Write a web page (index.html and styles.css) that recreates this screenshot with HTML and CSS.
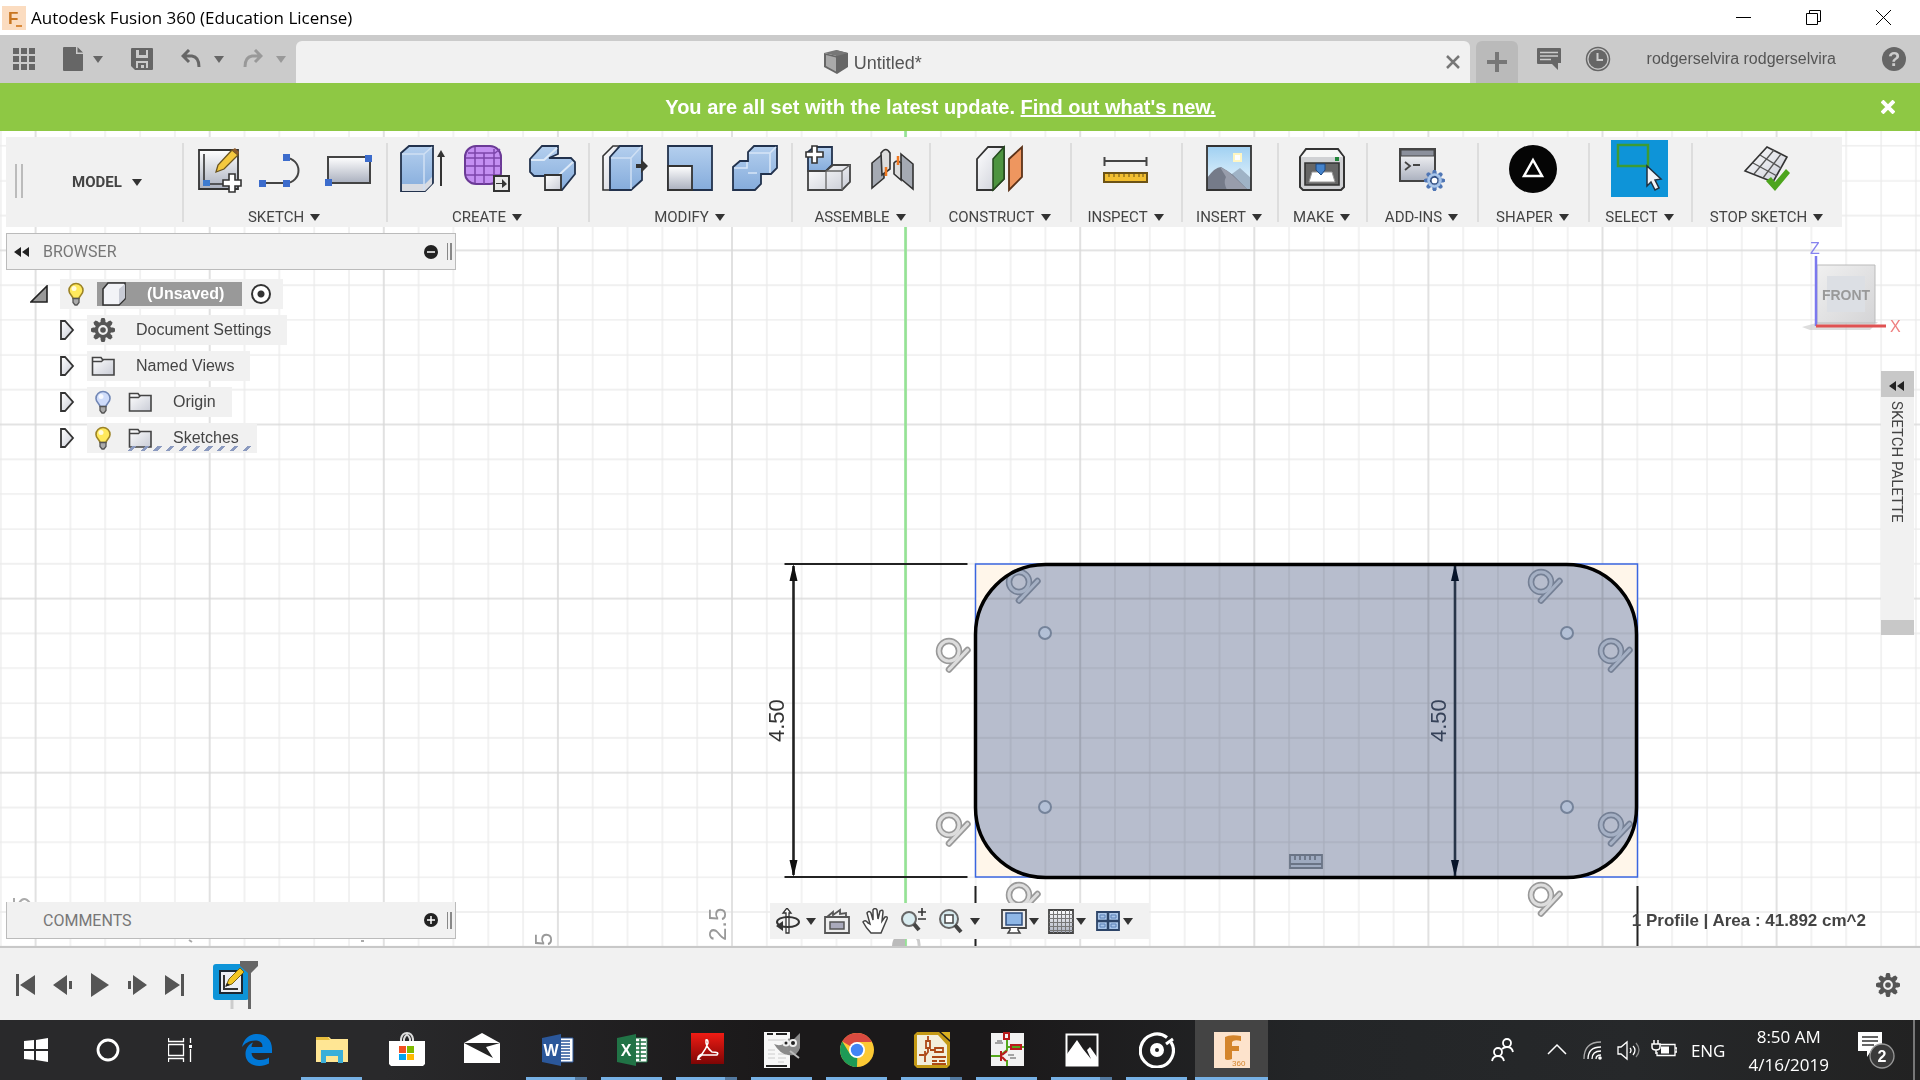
FILE: index.html
```html
<!DOCTYPE html>
<html lang="en">
<head>
<meta charset="utf-8">
<title>Autodesk Fusion 360 (Education License)</title>
<link rel="stylesheet" href="styles.css">
</head>
<body>
<svg class="defs" aria-hidden="true">
  <defs>
    <linearGradient id="blue" x1="0" y1="0" x2="0" y2="1"><stop offset="0" stop-color="#b4cfee"/><stop offset="1" stop-color="#85acdc"/></linearGradient>
    <linearGradient id="grey" x1="0" y1="0" x2="0" y2="1"><stop offset="0" stop-color="#fff"/><stop offset="1" stop-color="#aab0be"/></linearGradient>
    <linearGradient id="pale" x1="0" y1="0" x2="1" y2="1"><stop offset="0" stop-color="#fff"/><stop offset="1" stop-color="#c9ccd6"/></linearGradient>
    <linearGradient id="sky" x1="0" y1="0" x2="0" y2="1"><stop offset="0" stop-color="#9fd0f2"/><stop offset="1" stop-color="#eef8fd"/></linearGradient>
    <linearGradient id="red" x1="0" y1="0" x2="0" y2="1"><stop offset="0" stop-color="#f01c14"/><stop offset="1" stop-color="#7d0505"/></linearGradient>
    <linearGradient id="cube" x1="0" y1="0" x2="1" y2="1"><stop offset="0" stop-color="#f0f0f0"/><stop offset="1" stop-color="#d4d4d6"/></linearGradient>
    <symbol id="caret" viewBox="0 0 10 8"><path d="M0 1h10L5 8z"/></symbol>
    <symbol id="closed" viewBox="0 0 16 22"><path d="M2 2h4l8 9-8 9H2z" fill="url(#pale)" stroke="#333" stroke-width="1.8"/></symbol>
    <symbol id="folder" viewBox="0 0 24 24"><path d="M1.500 21V3.500H10l1.500 2H23V21z" fill="url(#pale)" stroke="#444" stroke-width="1.600"/><path d="M2 7.500h8.500l2-2" fill="none" stroke="#444" stroke-width="1.400"/></symbol>
    <symbol id="bulb" viewBox="0 0 24 24"><path d="M12 1.500a7 7 0 0 0-7 7c0 4 3.500 4.500 4 8h6c.5-3.500 4-4 4-8a7 7 0 0 0-7-7z" fill="currentColor" stroke="var(--rim)" stroke-width="1.600"/><circle cx="10" cy="6.500" r="2.500" fill="#fff" opacity=".8"/><path d="M9 16.500h6v4L13 23h-2l-2-2.500z" fill="#aaa" stroke="#555" stroke-width="1.300"/></symbol>
    <symbol id="gear" viewBox="0 0 24 24"><g fill="currentColor"><path id="tooth" d="M9.600 5V2L10.500 0h3l.9 2v3z"/><use href="#tooth" transform="rotate(45 12 12)"/><use href="#tooth" transform="rotate(90 12 12)"/><use href="#tooth" transform="rotate(135 12 12)"/><use href="#tooth" transform="rotate(180 12 12)"/><use href="#tooth" transform="rotate(225 12 12)"/><use href="#tooth" transform="rotate(270 12 12)"/><use href="#tooth" transform="rotate(315 12 12)"/></g><circle cx="12" cy="12" r="6.600" fill="none" stroke="currentColor" stroke-width="3.400"/><circle cx="12" cy="12" r="2.800" fill="currentColor"/></symbol>
    <g id="tangent-shape"><circle r="10"/><path d="M0 18.500 18.500-1"/></g>
    <g id="tangent" fill="none" stroke-linecap="round"><use href="#tangent-shape" stroke="var(--edge,#999)" stroke-width="6.500"/><use href="#tangent-shape" stroke="var(--core,#ddd)" stroke-width="3.200"/></g>
    <g id="spot"><circle r="6" fill="#b3c0d6" stroke="#75839a" stroke-width="2"/></g>
  </defs>
</svg>

<header class="titlebar">
  <svg width="24" height="24" viewBox="0 0 24 24"><rect width="24" height="24" fill="#fbdcc0"/><text x="6" y="18" class="logo-f">F</text><path d="M14 20h6" stroke="#d98a3c" stroke-width="2"/></svg>
  <h1>Autodesk Fusion 360 (Education License)</h1>
  <div class="window-controls">
    <button aria-label="Minimize"><svg width="15" height="15" viewBox="0 0 15 15"><path d="M0 7.500h15"/></svg></button>
    <button aria-label="Restore"><svg width="15" height="15" viewBox="0 0 15 15"><path d="M.5 3.500h11v11H.5zM3.500 3V.5h11v11H12"/></svg></button>
    <button aria-label="Close"><svg width="15" height="15" viewBox="0 0 15 15"><path d="M0 0l15 15M15 0 0 15"/></svg></button>
  </div>
</header>

<nav class="tabbar">
  <div class="quick">
    <button aria-label="Data panel"><svg width="22" height="22" viewBox="0 0 22 22"><path d="M0 0h6v6H0zM8 0h6v6H8zM16 0h6v6h-6zM0 8h6v6H0zM8 8h6v6H8zM16 8h6v6h-6zM0 16h6v6H0zM8 16h6v6H8zM16 16h6v6h-6z"/></svg></button>
    <button aria-label="File" class="file"><svg width="20" height="24" viewBox="0 0 20 24"><path d="M1 0h12v7h7v16a1 1 0 0 1-1 1H1a1 1 0 0 1-1-1V1a1 1 0 0 1 1-1zM14.500 0 20 5.500h-5.500z"/></svg><svg width="10" height="8"><use href="#caret"/></svg></button>
    <button aria-label="Save" class="save"><svg width="22" height="22" viewBox="0 0 22 22"><path fill-rule="evenodd" d="M1 0h20a1 1 0 0 1 1 1v20a1 1 0 0 1-1 1H4l-4-4V1a1 1 0 0 1 1-1zM5 2v8h12V2h-2v5H8V2zM5 20h2v-5h8v5h2v-7H5zM10 17h3v3h-3z"/></svg></button>
    <button aria-label="Undo"><svg width="20" height="20" viewBox="0 0 20 20"><path d="M8 1 2 7l6 6M2 7h9q7 1 7 11" fill="none" stroke="#666" stroke-width="3"/></svg><svg width="10" height="8"><use href="#caret"/></svg></button>
    <button aria-label="Redo" class="dim"><svg width="20" height="20" viewBox="0 0 20 20"><path d="m12 1 6 6-6 6M18 7H9q-7 1-7 11" fill="none" stroke="#999" stroke-width="3"/></svg><svg width="10" height="8"><use href="#caret"/></svg></button>
  </div>
  <div class="tab">
    <svg width="24" height="24" viewBox="0 0 24 24"><path d="M12 0 24 3v14l-11 7z" fill="#666"/><path d="M0 3 12 0l12 3-11 3z" fill="#777"/><path d="m0 3 13 3v18L0 17z" fill="#666"/><path d="m2 5 10 2.500v14L2 16z" fill="#aaa"/></svg>
    <span>Untitled*</span>
    <button aria-label="Close tab"><svg width="14" height="14" viewBox="0 0 14 14"><path d="m1 1 12 12M13 1 1 13" stroke="#777" stroke-width="2.500"/></svg></button>
  </div>
  <button class="newtab" aria-label="New tab"><svg width="20" height="20" viewBox="0 0 20 20"><path d="M10 0v20M0 10h20" stroke="#777" stroke-width="4"/></svg></button>
  <div class="account">
    <button aria-label="Comments"><svg width="24" height="24" viewBox="0 0 24 24"><path d="M1 1h22a1 1 0 0 1 1 1v14h-3v7l-6-6H1a1 1 0 0 1-1-1V2a1 1 0 0 1 1-1z"/><path d="M3 5.500h18M3 9h18M3 12.500h11" stroke="#ccc" stroke-width="1.500"/></svg></button>
    <button aria-label="Job status"><svg width="26" height="26" viewBox="0 0 26 26"><circle cx="13" cy="13" r="11.500" fill="none" stroke="#666" stroke-width="1.500"/><circle cx="13" cy="13" r="9.500"/><path d="M12.500 7v7H18" fill="none" stroke="#ccc" stroke-width="2"/></svg></button>
    <button class="user">rodgerselvira rodgerselvira</button>
    <button aria-label="Help"><svg width="24" height="24" viewBox="0 0 24 24"><circle cx="12" cy="12" r="12"/><text x="12" y="19" class="q">?</text></svg></button>
  </div>
</nav>

<aside class="notice">
  <p>You are all set with the latest update. <a href="#">Find out what's new.</a></p>
  <button aria-label="Dismiss"><svg width="14" height="14" viewBox="0 0 14 14"><path d="m1 1 12 12M13 1 1 13" stroke="#fff" stroke-width="4"/></svg></button>
</aside>

<main class="canvas">
  <svg class="drawing">
    <defs>
      <pattern id="grid" patternUnits="userSpaceOnUse" x="35.600" y="250.400" width="174.100" height="174.100">
        <path d="M34.800 0v175M69.600 0v175M104.500 0v175M139.300 0v175M0 34.800h175M0 69.600h175M0 104.500h175M0 139.300h175" stroke="#ebebeb" stroke-width="1.300"/>
        <path d="M0 0v175M174.100 0v175M0 0h175M0 174.100h175" stroke="#dadada" stroke-width="1.600"/>
      </pattern>
    </defs>
    <g transform="translate(0 -131)">
      <rect y="131" width="100%" height="100%" fill="url(#grid)"/>
      <path d="M905.500 131V2000" stroke="#94e394" stroke-width="2.600"/>
      <path d="M892 946a14 14 0 0 1 13-14v14z" fill="#bbb"/><path d="M908 931a14 14 0 0 1 11 15" fill="none" stroke="#ccc" stroke-width="3"/>
      <g class="axis"><text transform="translate(552 946) rotate(-90)">5</text><text transform="translate(726 941) rotate(-90)">2.5</text></g>
      <path d="m189 940 3 2M361 941h3M14 898v6M19 903q5-8 11 0" fill="none" stroke="#aaa" stroke-width="2"/>
      <rect x="975.500" y="564" width="662" height="313" fill="#fff6ea" stroke="#3a66e0" stroke-width="1.500"/>
      <g stroke="#222" stroke-width="2"><path d="M784.500 564H967.500M784.500 877H967.500M975.500 886v80M1637.500 886v80"/><path d="M793.500 566V875" stroke-width="2.600"/></g>
      <path d="m793.500 564 4 17h-8zM793.500 877l4-17h-8z" fill="#111"/>
      <g class="dim-text"><text transform="translate(784 742) rotate(-90)">4.50</text></g>
      <rect x="975.500" y="564.500" width="661" height="313" rx="70" fill="#fff"/>
      <rect x="975.500" y="564.500" width="661" height="313" rx="70" fill="url(#grid)"/>
      <rect class="profile" x="975.500" y="564.500" width="661" height="313" rx="70"/>
      <path d="M1455 566V876" stroke="#283549" stroke-width="2.600"/><path d="m1455 564 4 17h-8zM1455 877l4-17h-8z" fill="#07142a"/>
      <g class="dim-text inner"><text transform="translate(1446 742) rotate(-90)">4.50</text></g>
      <use href="#tangent" x="949" y="651"/><use href="#tangent" x="949" y="825"/><use href="#tangent" x="1019" y="895"/><use href="#tangent" x="1541" y="895"/>
      <g class="shaded"><use href="#tangent" x="1019" y="582"/><use href="#tangent" x="1541" y="582"/><use href="#tangent" x="1611" y="651"/><use href="#tangent" x="1611" y="825"/></g>
      <use href="#spot" x="1045" y="633"/><use href="#spot" x="1567" y="633"/><use href="#spot" x="1045" y="807"/><use href="#spot" x="1567" y="807"/>
      <path d="M1290 855h32v13h-32zM1290 864h32M1295 856v4M1300 856v4M1305 856v4M1310 856v4M1315 856v4" fill="#9eaac0" stroke="#6a7486" stroke-width="1.800"/>
      <rect class="outline" x="975.500" y="564.500" width="661" height="313" rx="70"/>
    </g>
  </svg>

  <div class="toolbar">
    <button class="workspace"><i class="grip"></i>MODEL <svg width="10" height="8"><use href="#caret"/></svg></button>
    <section class="group"><div class="icons">
      <button aria-label="Create sketch"><svg viewBox="0 0 48 48"><path d="M4 5h39v39H4z" fill="url(#grey)" stroke="#333" stroke-width="1.800"/><path d="M9 9v30h30" fill="none" stroke="#333" stroke-width="1.600"/><path d="M8 35h7v6H8z" fill="#3d7bd0"/><path d="m21 27 2-7L37 5l6 5-14 14z" fill="#f5c93f" stroke="#6b5520" stroke-width="1.300"/><path d="m37 5 3-2 4 4-1 3z" fill="#8a5a2c"/><path d="M34 29h6v6h6v6h-6v6h-6v-6h-6v-6h6z" fill="#fff" stroke="#333" stroke-width="1.600"/></svg></button>
      <button aria-label="Line"><svg viewBox="0 0 48 48"><path d="M2 38h24a12 12 0 0 0 0-25" fill="none" stroke="#444" stroke-width="2"/><path d="M-1 35h7v7h-7zM23 35h7v7h-7zM23 9h7v7h-7z" fill="#3c6ccc"/></svg></button>
      <button aria-label="Rectangle"><svg viewBox="0 0 48 48"><path d="M3 12h42v26H3z" fill="url(#grey)" stroke="#444" stroke-width="2"/><path d="M0 34h7v7H0zM40 10h7v7h-7z" fill="#3c6ccc"/></svg></button></div>
      <button class="label">SKETCH <svg width="10" height="8"><use href="#caret"/></svg></button></section>
    <section class="group"><div class="icons">
      <button aria-label="Extrude"><svg viewBox="0 0 48 48"><path d="m3 8 8-7h24v37l-8 8H3z" fill="url(#blue)" stroke="#22324d" stroke-width="1.800"/><path d="M4 39h23l7-7v7l-7 7H4z" fill="#d8dbe2"/><path d="M4 9h22l8-7M26 9v36" fill="none" stroke="#cfe0f4" stroke-width="1.500"/><path d="M43 41V9" stroke="#333" stroke-width="2"/><path d="m43 5 4 7h-8z" fill="#333"/></svg></button>
      <button aria-label="Create form"><svg viewBox="0 0 48 48"><rect x="2" y="1" width="36" height="38" rx="11" fill="#c48ff2" stroke="#6b3a96" stroke-width="2"/><path d="M3 13h34M3 21h35M3 30h34M12 2v36M21 8v31M31 4v33M5 8h27l5-4" fill="none" stroke="#7c46ab" stroke-width="1.500"/><path d="M31 31h15v15H31z" fill="#e8e8e8" stroke="#333" stroke-width="2"/><path d="M33 38h6v-4l5 5-5 4v-4h-6z" fill="#333"/></svg></button>
      <button aria-label="Sweep"><svg viewBox="0 0 48 48"><path d="m2 14 12-13h16v8l-9 4h22l4 4v12L34 45H18V31H6l-4-4z" fill="url(#blue)" stroke="#22324d" stroke-width="1.800"/><path d="m3 15 13 0 13-12M31 30l14-13" fill="none" stroke="#dce9f8" stroke-width="2"/><path d="M17 30h16v15H17z" fill="url(#pale)" stroke="#333" stroke-width="1.800"/></svg></button></div>
      <button class="label">CREATE <svg width="10" height="8"><use href="#caret"/></svg></button></section>
    <section class="group"><div class="icons">
      <button aria-label="Press pull"><svg viewBox="0 0 48 48"><path d="m2 11 10-10h7L10 12v33H2z" fill="url(#pale)" stroke="#333" stroke-width="1.600"/><path d="m9 12 10-11h22v34L30 45H9z" fill="url(#blue)" stroke="#22324d" stroke-width="1.800"/><path d="M10 13h20L40 2M30 13v31" fill="none" stroke="#cfe0f4" stroke-width="1.500"/><path d="M35 19h5v-5l7 7-7 7v-5h-5z" fill="#333"/></svg></button>
      <button aria-label="Scale"><svg viewBox="0 0 48 48"><path d="M2 1h44v44H2z" fill="url(#blue)" stroke="#22324d" stroke-width="1.800"/><path d="M2 21h24v24H2z" fill="url(#grey)" stroke="#333" stroke-width="1.800"/></svg></button>
      <button aria-label="Combine"><svg viewBox="0 0 48 48"><path d="m2 22 7-6h8V7l6-6h23v22l-6 6H30v10l-6 6H2z" fill="url(#blue)" stroke="#22324d" stroke-width="1.800"/><path d="M18 8h21l6-6M39 8v20M3 23h13v-6M17 28h9" fill="none" stroke="#d6e5f7" stroke-width="1.600"/></svg></button></div>
      <button class="label">MODIFY <svg width="10" height="8"><use href="#caret"/></svg></button></section>
    <section class="group"><div class="icons">
      <button aria-label="New component"><svg viewBox="0 0 48 48"><path d="M4 7 10 2h18v18l-6 6H4z" fill="url(#blue)" stroke="#22324d" stroke-width="1.800"/><path d="m22 26 7-6h17v17l-8 8H4V26z" fill="url(#pale)" stroke="#444" stroke-width="1.800"/><path d="M22 26v19M22 26h16l8-6M38 26v19" fill="none" stroke="#666" stroke-width="1.300"/><path d="M8 1h5v6h6v5h-6v6H8v-6H2V7h6z" fill="#fff" stroke="#333" stroke-width="1.600"/></svg></button>
      <button aria-label="Joint"><svg viewBox="0 0 48 48"><path d="M3 18 15 8V33L3 43z" fill="#a5aab3" stroke="#333" stroke-width="1.600"/><path d="M12 8q5-7 9 0v16l-8 6z" fill="#ddd" stroke="#333" stroke-width="1.600"/><path d="m32 9 12 10v25L32 34z" fill="#a5aab3" stroke="#333" stroke-width="1.600"/><path d="M25 18q3-4 7 0v17l-7-6z" fill="#ddd" stroke="#333" stroke-width="1.600"/><path d="M17 22v9M29 11v9" stroke="#f07820" stroke-width="2.500"/></svg></button></div>
      <button class="label">ASSEMBLE <svg width="10" height="8"><use href="#caret"/></svg></button></section>
    <section class="group"><div class="icons">
      <button aria-label="Construct"><svg viewBox="0 0 48 48"><path d="M1 14 12 2h16v32L17 45H1z" fill="url(#pale)" stroke="#333" stroke-width="1.800"/><path d="M17 14 28 2v32L17 45z" fill="#4d9440" stroke="#234a1d" stroke-width="1.500"/><path d="M33 14 46 2v30L33 45z" fill="#ee965f" stroke="#5c3218" stroke-width="1.800"/></svg></button></div>
      <button class="label">CONSTRUCT <svg width="10" height="8"><use href="#caret"/></svg></button></section>
    <section class="group"><div class="icons">
      <button aria-label="Measure"><svg viewBox="0 0 48 48"><path d="M2 16h43M2.500 12v9M44.500 12v9" stroke="#444" stroke-width="2"/><path d="M2 28h43v9H2z" fill="#f2bf31" stroke="#6d5315" stroke-width="2"/><path d="M7 29v3M12 29v3M17 29v3M22 29v3M27 29v3M32 29v3M37 29v3M41 29v3" stroke="#6d5315"/></svg></button></div>
      <button class="label">INSPECT <svg width="10" height="8"><use href="#caret"/></svg></button></section>
    <section class="group"><div class="icons">
      <button aria-label="Insert decal"><svg viewBox="0 0 48 48"><path d="M2 1h44v44H2z" fill="url(#sky)"/><path d="m20 34 15-11 11 10v12H25z" fill="#9fb3c6"/><path d="M2 33q8-11 14-11 7 4 12 8l15 15H2z" fill="#757b89"/><path d="M15 22q7 3 12 8l16 15H22q-4-8-1-13z" fill="#989dab"/><path d="M29 9h7v7h-7z" fill="#fff" stroke="#fff6c2" stroke-width="2"/><path d="M2 1h44v44H2z" fill="none" stroke="#333" stroke-width="1.800"/></svg></button></div>
      <button class="label">INSERT <svg width="10" height="8"><use href="#caret"/></svg></button></section>
    <section class="group"><div class="icons">
      <button aria-label="3D print"><svg viewBox="0 0 48 48"><path d="m2 12 6-8h32l6 8v30l-3 3H5l-3-3z" fill="#d0d1d4" stroke="#333" stroke-width="2"/><path d="m3 12 6-7h30l6 7z" fill="#f6f6f6"/><path d="M7 18h34v22H7z" fill="#666" stroke="#333" stroke-width="1.600"/><path d="M14 27h20l3 10H11z" fill="#fff" stroke="#999"/><path d="M18 19h9v6l-4 5-5-5z" fill="#4483cc" stroke="#1d4982"/><path d="M37 12h4v4h-4z" fill="#22863a"/></svg></button></div>
      <button class="label">MAKE <svg width="10" height="8"><use href="#caret"/></svg></button></section>
    <section class="group"><div class="icons">
      <button aria-label="Scripts and add-ins"><svg viewBox="0 0 48 48"><path d="M2 4h35v32H2z" fill="url(#grey)" stroke="#444" stroke-width="2"/><path d="M3 5h33v6H3z" fill="#8b909c" stroke="#444"/><path d="m7 17 5 4-5 4M15 20h7" fill="none" stroke="#444" stroke-width="1.800"/><g color="#4f76b5"><use href="#gear" x="26" y="25" width="21" height="21"/></g><circle cx="36.500" cy="35.500" r="6" fill="none" stroke="#a9c6ea" stroke-width="2.500"/><circle cx="36.500" cy="35.500" r="3.500" fill="#fff" stroke="#2d4c82" stroke-width="1.300"/></svg></button></div>
      <button class="label">ADD-INS <svg width="10" height="8"><use href="#caret"/></svg></button></section>
    <section class="group"><div class="icons">
      <button aria-label="Shaper"><svg viewBox="0 0 48 48"><circle cx="24" cy="24" r="24" fill="#050505"/><path d="m24 15 9 16H15z" fill="none" stroke="#fff" stroke-width="2.500"/></svg></button></div>
      <button class="label">SHAPER <svg width="10" height="8"><use href="#caret"/></svg></button></section>
    <section class="group"><div class="icons">
      <button aria-label="Select" class="active"><svg viewBox="0 0 57 57"><path d="M7 5h30v21H7z" fill="none" stroke="#3d9b35" stroke-width="2.500"/><path d="M36 26v20l4-4 4 8 4-2-4-8 6-1z" fill="#f2f4f8" stroke="#20303f" stroke-width="1.500"/></svg></button></div>
      <button class="label">SELECT <svg width="10" height="8"><use href="#caret"/></svg></button></section>
    <section class="group"><div class="icons">
      <button aria-label="Stop sketch"><svg viewBox="0 0 48 48"><path d="M24 2 44 12 30 37 2 26z" fill="url(#pale)" stroke="#333" stroke-width="1.600"/><path d="m31 5-20 24M38 9 20 33M17 10l21 13M10 18l24 13" stroke="#555" stroke-width="1.300"/><path d="m23 36 5-4 4 5 11-13 4 4-15 18z" fill="#4da51d"/></svg></button></div>
      <button class="label">STOP SKETCH <svg width="10" height="8"><use href="#caret"/></svg></button></section>
  </div>

  <div class="workarea">
    <div class="browser">
      <div class="panel-head">
        <button aria-label="Collapse"><svg width="15" height="10" viewBox="0 0 15 10"><path d="M0 5 7 0v10zM8 5l7-5v10z"/></svg></button>
        <h2>BROWSER</h2>
        <button aria-label="Hide"><svg width="14" height="14" viewBox="0 0 14 14"><circle cx="7" cy="7" r="7" fill="#222"/><path d="M3 7h8" stroke="#fff" stroke-width="1.500"/></svg></button><i class="grip"></i>
      </div>
      <ul class="tree">
        <li class="root"><button aria-label="Collapse"><svg width="18" height="18" viewBox="0 0 18 18"><path d="M17 1v16H1z" fill="#999" stroke="#222" stroke-width="1.600"/></svg></button>
          <span class="row"><svg class="on" width="24" height="24"><use href="#bulb"/></svg><span class="selected"><svg width="26" height="24" viewBox="0 0 26 24"><path d="m2 7 5-6h17v16l-6 6H2z" fill="#f2f3f7" stroke="#333" stroke-width="1.600"/><path d="M18 7v15l6-6V2z" fill="#c9ccd6"/></svg><b>(Unsaved)</b></span><input type="radio" name="component" checked aria-label="Activate component"></span></li>
        <li><button aria-label="Expand"><svg width="16" height="22"><use href="#closed"/></svg></button><span class="row"><svg width="24" height="24" color="#555"><use href="#gear"/></svg><span class="name">Document Settings</span></span></li>
        <li><button aria-label="Expand"><svg width="16" height="22"><use href="#closed"/></svg></button><span class="row"><svg width="24" height="24"><use href="#folder"/></svg><span class="name">Named Views</span></span></li>
        <li><button aria-label="Expand"><svg width="16" height="22"><use href="#closed"/></svg></button><span class="row"><svg class="off" width="24" height="24"><use href="#bulb"/></svg><svg class="second" width="24" height="24"><use href="#folder"/></svg><span class="name">Origin</span></span></li>
        <li><button aria-label="Expand"><svg width="16" height="22"><use href="#closed"/></svg></button><span class="row hatched"><svg class="on" width="24" height="24"><use href="#bulb"/></svg><svg class="second" width="24" height="24"><use href="#folder"/></svg><span class="name">Sketches</span></span></li>
      </ul>
    </div>
    <div class="right">
      <svg class="viewcube" width="112" height="100" viewBox="0 0 112 100">
        <path d="M12 85 30 80H88l-8 8H20z" fill="#bbb" opacity=".5"/>
        <path d="M27 23h58v58H27z" fill="url(#cube)" stroke="#bbb"/><path d="M37 34h38v36H37z" fill="#dcdfe4"/>
        <text x="56" y="58" class="front">FRONT</text>
        <path d="M26 14v70" stroke="#7b78ee" stroke-width="2.500"/><path d="M26 84h70" stroke="#e05252" stroke-width="3"/>
        <text x="20" y="12" class="z">Z</text><text x="100" y="90" class="x">X</text>
      </svg>
      <div class="palette"><button aria-label="Expand palette"><svg width="15" height="10" viewBox="0 0 15 10"><path d="M0 5 7 0v10zM8 5l7-5v10z"/></svg></button><span>SKETCH PALETTE</span></div>
    </div>
  </div>

  <div class="bottom">
    <div class="panel-head comments"><h2>COMMENTS</h2><button aria-label="Show comments"><svg width="14" height="14" viewBox="0 0 14 14"><circle cx="7" cy="7" r="7" fill="#222"/><path d="M3 7h8M7 3v8" stroke="#fff" stroke-width="1.500"/></svg></button><i class="grip"></i></div>
    <div class="navbar">
      <button class="orbit" aria-label="Orbit"><svg width="26" height="26" viewBox="0 0 26 26"><path d="M12 25V5H9l4-5 4 5h-2v20z" fill="#fff" stroke="#333" stroke-width="1.300"/><ellipse cx="14" cy="14" rx="11" ry="5" fill="none" stroke="#333" stroke-width="2"/><path d="m2 18 7-5v10z"/></svg><svg width="10" height="8"><use href="#caret"/></svg></button>
      <button aria-label="Look at"><svg width="26" height="26" viewBox="0 0 26 26"><path d="M1 9h24v16H1zM3 9l6-5v3l7-5v4l6-1v4" fill="#eee" stroke="#555" stroke-width="1.800"/><path d="M6 14h14v7H6z" fill="#aab" stroke="#555" stroke-width="1.500"/></svg></button>
      <button aria-label="Pan"><svg width="26" height="26" viewBox="0 0 26 26"><path d="M9 25Q4 20 1 14q2-3 5 1l2 1L5 5q2-3 4 0l2 7V2q2-3 4 0l1 9 2-8q3-2 3 1l-1 9 3-4q3-1 2 2l-6 14z" fill="#fff" stroke="#444" stroke-width="1.500"/></svg></button>
      <button aria-label="Zoom"><svg width="26" height="26" viewBox="0 0 26 26"><circle cx="9" cy="11" r="7" fill="#d9ecf0" stroke="#666" stroke-width="2"/><path d="m14 16 5 6" stroke="#444" stroke-width="4"/><path d="M22 0v8M18 4h8M18 11h8" stroke="#333" stroke-width="1.600"/></svg></button>
      <button aria-label="Fit"><svg width="26" height="26" viewBox="0 0 26 26"><circle cx="11" cy="11" r="9" fill="#d9ecf0" stroke="#666" stroke-width="2"/><path d="M7 7h8v8H7z" fill="#fff" stroke="#444" stroke-width="1.500"/><path d="m17 17 6 7" stroke="#444" stroke-width="4"/></svg><svg width="10" height="8"><use href="#caret"/></svg></button>
      <button class="display" aria-label="Display settings"><svg width="26" height="26" viewBox="0 0 26 26"><path d="M1 2h24v18H1z" fill="#eee" stroke="#444" stroke-width="1.800"/><path d="M5 5h16v12H5z" fill="#8fb7e6" stroke="#2f4f80" stroke-width="1.500"/><path d="M9 20v2l-2 3h12l-2-3v-2" fill="#fff" stroke="#444" stroke-width="1.500"/></svg><svg width="10" height="8"><use href="#caret"/></svg></button>
      <button aria-label="Grid and snaps"><svg width="26" height="26" viewBox="0 0 26 26"><path d="M1 2h24v23H1z" fill="url(#grey)" stroke="#444" stroke-width="1.800"/><path d="M5.500 2v23M9.500 2v23M13.500 2v23M17.500 2v23M21.500 2v23M1 6.500h24M1 10.500h24M1 14.500h24M1 18.500h24M1 22.500h24" stroke="#777"/></svg><svg width="10" height="8"><use href="#caret"/></svg></button>
      <button aria-label="Viewports"><svg width="26" height="26" viewBox="0 0 26 26"><path d="M2 4h22v18H2z" fill="#a9c6ea" stroke="#2c4468" stroke-width="1.800"/><path d="M13 4v18M2 13h22" stroke="#2c4468" stroke-width="2.500"/><path d="M5 7h5v3H5zM16 7h5v3h-5zM5 16h5v3H5zM16 16h5v3h-5z" fill="none" stroke="#5c82b8"/></svg><svg width="10" height="8"><use href="#caret"/></svg></button>
    </div>
    <p class="status">1 Profile | Area : 41.892 cm^2</p>
  </div>
</main>

<section class="timeline">
  <button aria-label="Go to start"><svg width="20" height="22" viewBox="0 0 20 22"><path d="M0 0h3v22H0zM4 11 19 1v20z"/></svg></button>
  <button aria-label="Step back"><svg width="20" height="22" viewBox="0 0 20 22"><path d="M0 11 14 1v20zM16 7h3v8h-3z"/></svg></button>
  <button aria-label="Play"><svg width="20" height="24" viewBox="0 0 20 24"><path d="M1 0 19 12 1 24z"/></svg></button>
  <button aria-label="Step forward"><svg width="20" height="22" viewBox="0 0 20 22"><path d="M20 11 6 1v20zM1 7h3v8H1z"/></svg></button>
  <button aria-label="Go to end"><svg width="20" height="22" viewBox="0 0 20 22"><path d="M20 0h-3v22h3zM16 11 1 1v20z"/></svg></button>
  <button class="feature" aria-label="Sketch1"><svg width="46" height="50" viewBox="0 0 46 50"><rect y="4" width="36" height="36" rx="3" fill="#0e94d8"/><path d="M7 11h22v22H7z" fill="#eceef4" stroke="#1c2733" stroke-width="2"/><path d="M11 15v14h14" fill="none" stroke="#333" stroke-width="2"/><path d="m13 26 3-7L27 8l4 4-12 12z" fill="#f3c623" stroke="#7a6414"/><path d="m12 27 2-4 3 2z" fill="#222"/><path d="M19 40v9" stroke="#ccc" stroke-width="3"/><path d="M27 1h18v5l-7 7v36h-3V13l-8-7z" fill="#666"/></svg></button>
  <button class="settings" aria-label="Timeline settings"><svg width="24" height="24"><use href="#gear"/></svg></button>
</section>

<footer class="taskbar">
  <div class="system">
    <button aria-label="Start"><svg width="24" height="24" viewBox="0 0 24 24"><path d="m0 3 10-1v9H0zM12 2l12-2v11H12zM0 13h10v9L0 21zM12 13h12v11l-12-2z" fill="#fff"/></svg></button>
    <button aria-label="Cortana"><svg width="24" height="24" viewBox="0 0 24 24"><circle cx="12" cy="12" r="10" fill="none" stroke="#fff" stroke-width="2.800"/></svg></button>
    <button aria-label="Task view"><svg width="24" height="24" viewBox="0 0 24 24"><path d="M.5 6.500h15v11H.5zM.5 0v3.500h15V0M.5 24v-3.500h15V24M22.500 0v5M22.500 11v13" fill="none" stroke="#fff" stroke-width="1.300"/><path d="M21 7h3v3h-3z" fill="#fff"/></svg></button>
  </div>
  <div class="apps">
    <button aria-label="Edge"><svg width="36" height="36" viewBox="-3 -2 36 36"><path d="M0 13C2 4 8 0 15 0c9 0 15 6 15 15v4H9.500c.5 5 4.500 7 9 7 3.500 0 6.500-1 8.500-2.500v6C24 31 21 32 17.500 32 9 32 3.500 27 3.500 20 3.500 14.500 6.500 10.500 11 8.500 10 10 9.500 11.500 9.500 13h11c0-4-2-6-6-6.500C8 6 3 9 0 13z" fill="#0078d7"/></svg></button>
    <button aria-label="File Explorer" class="run"><svg width="36" height="36" viewBox="0 0 36 36"><path d="M2 5h13l2 2h17v23H2z" fill="#ffe694"/><path d="M2 5h12l2 3H2z" fill="#e8be3e"/><path d="M7 18h22v13h-5v-7H12v7H7z" fill="#3bafd9"/></svg></button>
    <button aria-label="Store"><svg width="36" height="36" viewBox="0 0 36 36"><path d="M12 10V7q1-6 6-6t6 6v3M15 10V7q3-8 6 0v3" fill="none" stroke="#ddd" stroke-width="2"/><path d="M0 9h36v23l-2 2H2l-2-2z" fill="#fff"/><path d="M10 14h7v7h-7z" fill="#f25022"/><path d="M18 14h7v7h-7z" fill="#7fba00"/><path d="M10 22h7v6h-7z" fill="#00a4ef"/><path d="M18 22h7v6h-7z" fill="#ffb900"/></svg></button>
    <button aria-label="Mail"><svg width="36" height="36" viewBox="0 0 36 36"><path d="M0 11 18 1l18 10v20H0z" fill="#fff"/><path d="m0 11 29 15-7-11 14-4H0z" fill="#242424"/></svg></button>
    <button aria-label="Word" class="run many"><svg width="36" height="36" viewBox="0 0 36 36"><path d="M18 6h16v24H18z" fill="#fff" stroke="#2b579a"/><path d="M19 9h12M19 12h12M19 15h12M19 18h12M19 21h12M19 24h12M19 27h12" stroke="#2b579a" stroke-width="1.300"/><path d="M3 6 22 2v32L3 30z" fill="#2b579a"/><text x="12" y="24" class="office">W</text></svg></button>
    <button aria-label="Excel" class="run"><svg width="36" height="36" viewBox="0 0 36 36"><path d="M18 6h15v24H18z" fill="#fff" stroke="#217346"/><path d="M19 10h13M19 14h13M19 18h13M19 22h13M19 26h13M26 7v22" stroke="#217346" stroke-width="1.500"/><path d="M3 6 22 2v32L3 30z" fill="#217346"/><text x="12" y="24" class="office">X</text></svg></button>
    <button aria-label="Acrobat Reader" class="run many"><svg width="36" height="36" viewBox="0 0 36 36"><path d="M2 1h33v31H2z" fill="url(#red)"/><path d="M10 27q-3-2 3-5 4-5 6-11 0-4-2-3-1 6 6 12 8 0 5 3-5 0-15 0-6 5-4 4z" fill="none" stroke="#fff" stroke-width="1.500"/></svg></button>
    <button aria-label="GIMP" class="run"><svg width="36" height="36" viewBox="0 0 36 36"><path d="M0 0h26v36H0z" fill="#f7f7f7"/><path d="M3 2h6M12 2h11M2 34h21" stroke="#222" stroke-width="2"/><path d="M4 8h18M4 18h7M4 22h7M4 26h7M14 22h8M14 26h8M14 30h6" stroke="#ccc"/><path d="M10 12q9 4 15-6l3 3 8-8v15q-3 9-12 7-8-1-14-11z" fill="#8a8a8a"/><circle cx="22" cy="11" r="3.500" fill="#eee"/><circle cx="22" cy="11" r="1.500" fill="#222"/><circle cx="29" cy="11" r="4" fill="#eee"/><circle cx="29" cy="11" r="2" fill="#222"/><path d="m26 19 9 7" stroke="#bbb" stroke-width="2"/></svg></button>
    <button aria-label="Chrome" class="run"><svg width="36" height="36" viewBox="0 0 36 36"><circle cx="18" cy="18" r="17" fill="#fcc934"/><path d="M18 18 3.300 9.500A17 17 0 0 1 33 10H18z" fill="#d94a40"/><path d="m3.300 9.500 8 13 7 3L18 35A17 17 0 0 1 3.300 9.500z" fill="#1d9a56"/><circle cx="18" cy="18" r="8" fill="#fff"/><circle cx="18" cy="18" r="6.200" fill="#4285f4"/></svg></button>
    <button aria-label="Schematic editor" class="run many"><svg width="36" height="36" viewBox="0 0 36 36"><path d="M3 0h22l11 10v23l-3 3H3l-3-3V3z" fill="#c49a16"/><path d="M3 3h21l9 10v20H3z" fill="#f3efdc"/><path d="m27 0 9 8V0z" fill="#d9b021"/><path d="M14 4v5h-2v7h4V9h-2M14 16v4l-3 4v6M5 23h5M11 19v8M16 18h5v-2h8v4h-8v-2M18 25h14M18 29h5M25 29h6M18 32h14" fill="none" stroke="#ad4a18" stroke-width="1.800"/></svg></button>
    <button aria-label="Circuit" class="run"><svg width="36" height="36" viewBox="0 0 36 36"><path d="M2 1h33v33H2z" fill="#f2f2f2"/><path d="M18 8v10l-5 4M18 15h17M2 24h9M18 28v6" fill="none" stroke="#55a81c" stroke-width="2"/><path d="M15 1h5v6h-5zM22 13h10v4H22zM12 19v10M13 23l5-4M13 25l4 4" fill="none" stroke="#b81c1c" stroke-width="2"/><path d="M6 11h8M8 9h5M19 23h6M21 26h6" stroke="#555"/></svg></button>
    <button aria-label="Photos" class="run many"><svg width="36" height="36" viewBox="0 0 36 36"><path d="M2.500 2.500h31v31h-31z" fill="none" stroke="#fff" stroke-width="2"/><path d="M3 22 13 8l6 9 8 10-4-9 3-3 7 10v9H3z" fill="#fff"/></svg></button>
    <button aria-label="Groove" class="run"><svg width="36" height="36" viewBox="0 0 36 36"><path d="M28 5.500A16.500 16.500 0 1 0 32 10" fill="none" stroke="#fff" stroke-width="3.200"/><circle cx="18" cy="18" r="4.500" fill="none" stroke="#fff" stroke-width="5"/><path d="m27 12 7-5" stroke="#fff" stroke-width="3"/></svg></button>
    <button aria-label="Fusion 360" class="run current"><svg width="36" height="36" viewBox="0 0 36 36"><path d="M0 0h36v36H0z" fill="#fde3cc"/><path d="M11 5q5-3 16-1v5q-7-2-9 1v4h7v5h-7v8q-5 2-7 0z" fill="#d4852c"/><text x="18" y="34" class="small-360">360</text></svg></button>
  </div>
  <div class="tray">
    <button aria-label="People"><svg width="24" height="24" viewBox="0 0 24 24"><g fill="none" stroke="#fff" stroke-width="1.800"><circle cx="16" cy="5" r="4"/><circle cx="7" cy="14" r="4"/><path d="M1 23q1-5 6-5t6 5M11 11q2-2 5-2 5 0 6 5"/></g></svg></button>
    <button aria-label="Show hidden icons"><svg width="20" height="24" viewBox="0 0 20 24"><path d="m1 16 9-9 9 9" fill="none" stroke="#fff" stroke-width="1.500"/></svg></button>
    <button aria-label="Network"><svg width="24" height="24" viewBox="0 0 24 24"><g fill="none" stroke="#aaa" stroke-width="1.300"><path d="M3 21Q3 4 20 4"/><path d="M7 21Q7 9 20 9M11 21q0-8 9-8M15 21q0-4 5-4" stroke="#fff"/></g><circle cx="19" cy="20" r="1.800" fill="#fff"/></svg></button>
    <button aria-label="Volume"><svg width="24" height="24" viewBox="0 0 24 24"><g fill="none" stroke="#fff" stroke-width="1.300"><path d="M2 9h3l6-5v17l-6-5H2z"/><path d="M14 10q2 2 0 5M17 8q4 4 0 9"/><path d="M20 5q6 7 0 14" stroke="#888"/></g></svg></button>
    <button aria-label="Battery"><svg width="26" height="24" viewBox="0 0 26 24"><path d="M9 6.500h15v11H6V14M24 10h2v4h-2" fill="none" stroke="#fff" stroke-width="1.300"/><path d="M10 8.500h8v7h-8z" fill="#fff"/><path d="M3 2v4M7 2v4M1 6h8v3q0 3-4 3t-4-3zM5 12v4" fill="none" stroke="#fff" stroke-width="1.500"/></svg></button>
    <button class="lang">ENG</button>
    <button class="clock"><span>8:50 AM</span><span>4/16/2019</span></button>
    <button aria-label="2 notifications"><svg width="38" height="38" viewBox="0 0 38 38"><path d="M1 1h24v19H14l-4 6v-6H1z" fill="#fff"/><path d="M5 6h16M5 10h16M5 14h12" stroke="#333" stroke-width="1.500"/><circle cx="25" cy="25" r="12" fill="#3a3a3a" stroke="#999" stroke-width="1.300"/><text x="25" y="31" class="badge">2</text></svg></button>
  </div>
  <button class="peek" aria-label="Show desktop"></button>
</footer>
</body>
</html>
```
FILE: styles.css
```css
* { box-sizing: border-box; }
html, body { height: 100%; }
body {
  margin: 0;
  display: flex;
  flex-direction: column;
  overflow: hidden;
  background: #fff;
  color: #444;
  font: 16px "Liberation Sans", Arial, sans-serif;
}
h1, h2, p, ul { margin: 0; padding: 0; font-size: inherit; font-weight: inherit; }
ul { list-style: none; }
button {
  display: flex;
  align-items: center;
  justify-content: center;
  padding: 0;
  border: 0;
  background: none;
  color: inherit;
  font: inherit;
  white-space: nowrap;
}
svg { display: block; flex: none; fill: currentColor; }
.defs { position: absolute; width: 0; height: 0; }

/* Window title */
.titlebar {
  flex: none;
  display: flex;
  align-items: center;
  gap: 5px;
  height: 35px;
  padding: 0 2px;
  color: #000;
  font: 17px "Open Sans", "Noto Sans", sans-serif;
}
.titlebar h1 { flex: 1; }
.logo-f { font: bold 17px "Liberation Sans", sans-serif; fill: #c87520; }
.window-controls { display: flex; height: 100%; }
.window-controls button { width: 70px; }
.window-controls svg { fill: none; stroke: #000; stroke-width: 1; }

/* Document tabs */
.tabbar {
  flex: none;
  display: flex;
  align-items: flex-end;
  height: 48px;
  background: #cbcbcb;
  color: #666;
}
.quick { display: flex; align-items: center; gap: 28px; width: 296px; height: 48px; padding-left: 13px; }
.quick button { gap: 13px; }
.quick .file { gap: 10px; }
.quick .dim { margin-left: -9px; color: #999; }
.tab {
  flex: 1;
  display: flex;
  align-items: center;
  gap: 6px;
  height: 42px;
  padding: 0 10px;
  border-radius: 6px 6px 0 0;
  background: #f1f1f1;
  color: #555;
  font-size: 18px;
}
.tab > svg { margin-left: auto; }
.tab span { padding-top: 2px; }
.tab button { margin-left: auto; }
.newtab { width: 42px; height: 42px; margin-left: 6px; border-radius: 6px 6px 0 0; background: #bababa; }
.account { display: flex; align-items: center; height: 48px; gap: 24px; padding: 0 14px 0 19px; }
.account .user { margin: 0 22px 0 12px; color: #555; }
.q { font: bold 20px "Liberation Sans", sans-serif; fill: #ccc; text-anchor: middle; }

/* Update notice */
.notice {
  flex: none;
  display: flex;
  align-items: center;
  height: 48px;
  padding: 0 25px 0 24px;
  background: #8ec844;
  color: #fff;
  font-size: 20px;
  font-weight: bold;
}
.notice p { flex: 1; padding-right: 24px; text-align: center; }
.notice a { color: inherit; }

/* Modelling canvas */
.canvas {
  position: relative;
  flex: 1;
  min-height: 0;
  display: flex;
  flex-direction: column;
  overflow: hidden;
  padding: 6px 6px 7px;
}
.canvas > div { position: relative; }
.drawing { position: absolute; inset: 0; width: 100%; height: 100%; }
.axis { font: 24px "Liberation Sans", sans-serif; fill: #999; }
.dim-text { font: 22px "Liberation Sans", sans-serif; fill: #333; }
.inner { fill: #354158; }
.profile { fill: #b7bdcd; mix-blend-mode: multiply; }
.outline { fill: none; stroke: #000; stroke-width: 3.5; }
.shaded { --edge: #758095; --core: #a5b0c4; }

.toolbar {
  flex: none;
  display: grid;
  grid-template-columns: 176fr 204fr 202fr 203fr 138fr 141fr 111fr 96fr 89fr 111fr 111fr 103fr 151fr;
  height: 90px;
  margin-right: 72px;
  background: #f1f1f1;
  font: 15px Roboto, "Liberation Sans", sans-serif;
}
.workspace { position: relative; gap: 10px; padding-left: 26px; font-weight: bold; }
.workspace .grip { position: absolute; left: 9px; top: 27px; width: 8px; height: 34px; border: solid #bbb; border-width: 0 2px; }
.group { display: flex; flex-direction: column; align-items: center; padding-right: 2px; border-left: 2px solid #ddd; border-image: linear-gradient(#f1f1f1 7px, #ddd 7px, #ddd 84px, #f1f1f1 84px) 1; }
.icons { display: flex; align-items: center; justify-content: center; gap: 17px; height: 63px; }
.icons svg { width: 48px; height: 48px; overflow: visible; }
.icons .active { background: #0e94d8; }
.icons .active svg { width: 57px; height: 57px; }
.label { gap: 6px; height: 34px; }
.group .label { min-height: 34px; margin-bottom: -7px; }
.group .label svg, .workspace svg { color: #333; }

.workarea { flex: 1; min-height: 0; display: flex; justify-content: space-between; align-items: flex-start; padding-top: 6px; }
.panel-head {
  display: flex;
  align-items: center;
  width: 450px;
  height: 37px;
  padding-left: 7px;
  border: 1px solid #bbb;
  background: #f1f1f1;
  color: #777;
  font: 16px Roboto, "Liberation Sans", sans-serif;
}
.panel-head h2 { flex: 1; padding-left: 14px; }
.panel-head button { color: #222; }
.panel-head .grip { width: 5px; height: 17px; margin: 0 3px 0 9px; border: solid #888; border-width: 0 2px 0 1px; }
.panel-head.comments { padding-left: 22px; border-top: 0; }

.tree { padding-top: 9px; }
.tree li { display: flex; align-items: center; gap: 12px; height: 30px; margin-bottom: 6px; padding-left: 53px; }
.tree .root { padding-left: 24px; }
.row { position: relative; display: flex; align-items: center; height: 30px; padding: 0 16px 0 4px; background: #f1f1f1; }
.name { padding-left: 21px; }
.second { margin-left: 13px; }
.root .row { gap: 9px; padding: 0 12px 0 4px; }
.selected { display: flex; align-items: center; gap: 20px; height: 24px; padding: 0 18px 0 4px; background: #999; color: #fff; }
.on { color: #ffe95c; --rim: #9c8326; }
.off { color: #cfdcfa; --rim: #7086b5; }
.root input { appearance: none; width: 20px; height: 20px; margin: 0; border: 2px solid #333; border-radius: 50%; background: radial-gradient(#333 3px, #fff 4px); }
.row.hatched { padding-right: 18px; }
.hatched::after { content: ""; position: absolute; left: 37px; right: 2px; bottom: 2px; height: 5px; background: repeating-linear-gradient(135deg, transparent 0 6px, #8b9abf 6px 9px); }

.right { display: flex; flex-direction: column; align-items: flex-end; gap: 29px; padding-top: 9px; }
.viewcube { margin-right: 12px; overflow: visible; }
.front { font: bold 14px "Liberation Sans", sans-serif; fill: #999; text-anchor: middle; }
.z { font: 16px "Liberation Sans", sans-serif; fill: #8683ee; }
.x { font: 16px "Liberation Sans", sans-serif; fill: #ee8080; }
.palette {
  width: 33px;
  height: 264px;
  display: flex;
  flex-direction: column;
  border-bottom: 15px solid #c8c8c8;
  background: #f1f1f1;
  font: 15px/31px Roboto, "Liberation Sans", sans-serif;
}
.palette button { height: 26px; padding: 4px 3px 0 0; background: #c8c8c8; color: #222; }
.palette span { writing-mode: vertical-rl; padding: 4px 2px 0 0; }

.bottom { flex: none; display: flex; align-items: center; height: 37px; }
.navbar { display: flex; align-items: center; gap: 12px; height: 36px; margin-left: 314px; padding: 0 19px 0 4px; background: #f1f1f1; color: #333; }
.navbar button { gap: 6px; }
.navbar .orbit { margin-right: -4px; }
.navbar button:nth-child(n+6) { gap: 2px; margin-right: -3px; }
.navbar .display { margin-left: 9px; }
.status { margin-left: auto; padding-right: 48px; font-size: 17px; font-weight: bold; }

/* Timeline */
.timeline {
  flex: none;
  display: flex;
  align-items: center;
  gap: 17px;
  height: 74px;
  padding: 2px 20px 0 16px;
  border-top: 2px solid #c8c8c8;
  background: #f1f1f1;
  color: #555;
}
.feature { margin-left: 12px; }
.settings { margin-left: auto; }

/* Taskbar */
.taskbar {
  flex: none;
  display: flex;
  height: 60px;
  background: linear-gradient(90deg, #29292b, #29292b 20%, #1b191a 40%, #1b191a 52%, #232527 68%, #26282a 85%, #222);
  color: #fff;
  font: 17px "Open Sans", "Noto Sans", sans-serif;
}
.system, .apps, .tray { display: flex; }
.system button { width: 72px; }
.apps { padding-left: 3px; }
.apps button { width: 61px; margin: 0 7px; border: solid transparent; border-width: 3px 0; }
.apps .run { border-bottom-color: #76b0e4; }
.apps .many { border-image: linear-gradient(90deg, #76b0e4 47px, #53799f 47px) 3; border-image-width: 0 0 3px; }
.apps .current { width: 73px; margin: 0 1px; background: #444; background-clip: padding-box; border-top-color: #444; }
.office { font: bold 16px "Liberation Sans", sans-serif; fill: #fff; text-anchor: middle; }
.small-360 { font: 8px "Liberation Sans", sans-serif; fill: #d4852c; }
.tray { margin-left: auto; gap: 11px; }
.tray button:nth-child(1) { margin-right: 21px; }
.tray button:nth-child(2) { margin-right: 3px; }
.tray .lang { margin-left: 3px; }
.tray .clock { flex-direction: column; line-height: 28px; margin: 2px 17px 0 12px; }
.badge { font: bold 16px "Liberation Sans", sans-serif; fill: #fff; text-anchor: middle; }
.peek { width: 7px; margin-left: 18px; border-left: 2px solid #777; }
```
